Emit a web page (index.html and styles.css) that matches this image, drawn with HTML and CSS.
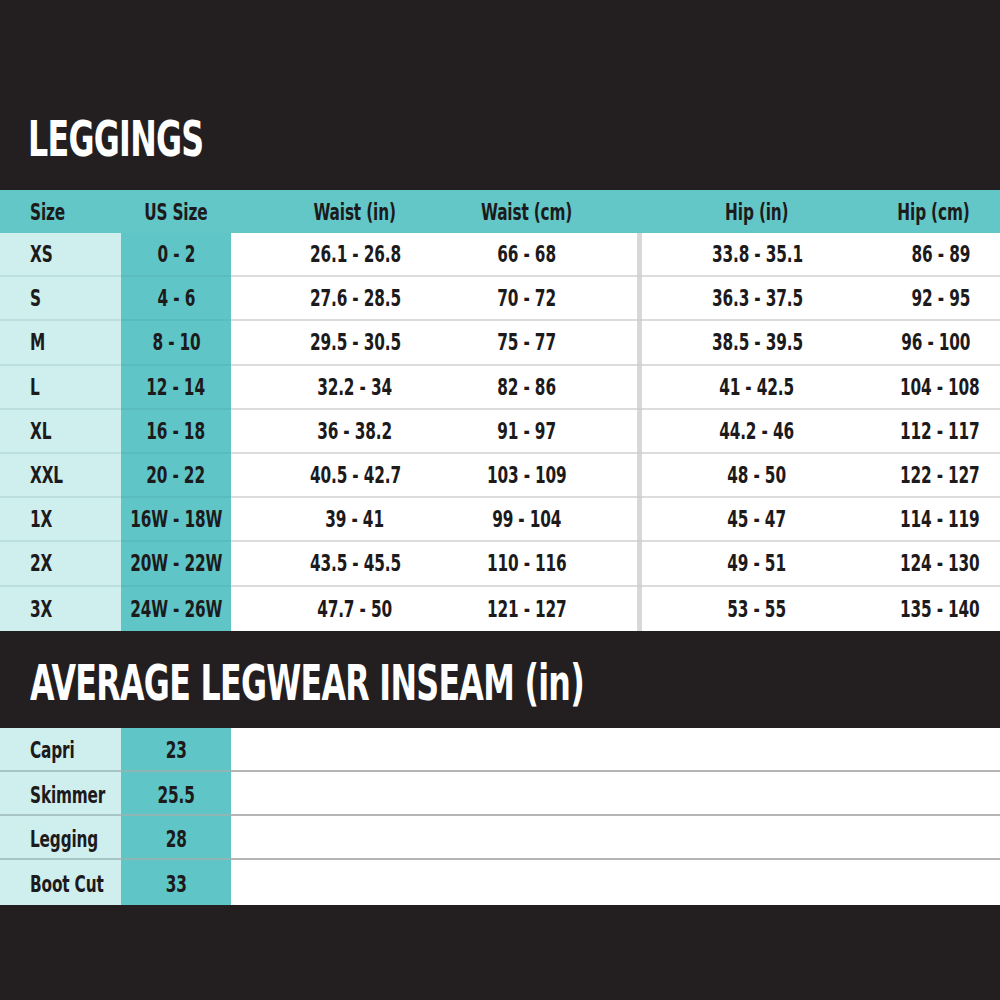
FILE: index.html
```html
<!DOCTYPE html>
<html lang="en">
<head>
<meta charset="utf-8">
<title>Leggings size chart</title>
<link rel="stylesheet" href="styles.css">
</head>
<body>
<div class="page">
  <h1 class="title title-top"><span class="tt">LEGGINGS</span></h1>
  <div class="size-table">
    <div class="row head">
      <div class="cell c-size"><span class="t">Size</span></div>
      <div class="cell c-us"><span class="t">US Size</span></div>
      <div class="cell c-mid"><span class="t">Waist (in)</span></div>
      <div class="cell c-mid"><span class="t">Waist (cm)</span></div>
      <div class="cell c-gap"></div>
      <div class="cell c-div"></div>
      <div class="cell c-mid"><span class="t">Hip (in)</span></div>
      <div class="cell c-right"><span class="t">Hip (cm)</span></div>
    </div>
    <div class="row body">
      <div class="cell c-size"><span class="t">XS</span></div><div class="cell c-us"><span class="t">0 - 2</span></div><div class="cell c-mid"><span class="t">26.1 - 26.8</span></div><div class="cell c-mid"><span class="t">66 - 68</span></div><div class="cell c-gap"></div><div class="cell c-div"></div><div class="cell c-mid"><span class="t">33.8 - 35.1</span></div><div class="cell c-right"><span class="t">86 - 89</span></div>
    </div>
    <div class="row body">
      <div class="cell c-size"><span class="t">S</span></div><div class="cell c-us"><span class="t">4 - 6</span></div><div class="cell c-mid"><span class="t">27.6 - 28.5</span></div><div class="cell c-mid"><span class="t">70 - 72</span></div><div class="cell c-gap"></div><div class="cell c-div"></div><div class="cell c-mid"><span class="t">36.3 - 37.5</span></div><div class="cell c-right"><span class="t">92 - 95</span></div>
    </div>
    <div class="row body">
      <div class="cell c-size"><span class="t">M</span></div><div class="cell c-us"><span class="t">8 - 10</span></div><div class="cell c-mid"><span class="t">29.5 - 30.5</span></div><div class="cell c-mid"><span class="t">75 - 77</span></div><div class="cell c-gap"></div><div class="cell c-div"></div><div class="cell c-mid"><span class="t">38.5 - 39.5</span></div><div class="cell c-right"><span class="t">96 - 100</span></div>
    </div>
    <div class="row body">
      <div class="cell c-size"><span class="t">L</span></div><div class="cell c-us"><span class="t">12 - 14</span></div><div class="cell c-mid"><span class="t">32.2 - 34</span></div><div class="cell c-mid"><span class="t">82 - 86</span></div><div class="cell c-gap"></div><div class="cell c-div"></div><div class="cell c-mid"><span class="t">41 - 42.5</span></div><div class="cell c-right"><span class="t">104 - 108</span></div>
    </div>
    <div class="row body">
      <div class="cell c-size"><span class="t">XL</span></div><div class="cell c-us"><span class="t">16 - 18</span></div><div class="cell c-mid"><span class="t">36 - 38.2</span></div><div class="cell c-mid"><span class="t">91 - 97</span></div><div class="cell c-gap"></div><div class="cell c-div"></div><div class="cell c-mid"><span class="t">44.2 - 46</span></div><div class="cell c-right"><span class="t">112 - 117</span></div>
    </div>
    <div class="row body">
      <div class="cell c-size"><span class="t">XXL</span></div><div class="cell c-us"><span class="t">20 - 22</span></div><div class="cell c-mid"><span class="t">40.5 - 42.7</span></div><div class="cell c-mid"><span class="t">103 - 109</span></div><div class="cell c-gap"></div><div class="cell c-div"></div><div class="cell c-mid"><span class="t">48 - 50</span></div><div class="cell c-right"><span class="t">122 - 127</span></div>
    </div>
    <div class="row body">
      <div class="cell c-size"><span class="t">1X</span></div><div class="cell c-us"><span class="t">16W - 18W</span></div><div class="cell c-mid"><span class="t">39 - 41</span></div><div class="cell c-mid"><span class="t">99 - 104</span></div><div class="cell c-gap"></div><div class="cell c-div"></div><div class="cell c-mid"><span class="t">45 - 47</span></div><div class="cell c-right"><span class="t">114 - 119</span></div>
    </div>
    <div class="row body">
      <div class="cell c-size"><span class="t">2X</span></div><div class="cell c-us"><span class="t">20W - 22W</span></div><div class="cell c-mid"><span class="t">43.5 - 45.5</span></div><div class="cell c-mid"><span class="t">110 - 116</span></div><div class="cell c-gap"></div><div class="cell c-div"></div><div class="cell c-mid"><span class="t">49 - 51</span></div><div class="cell c-right"><span class="t">124 - 130</span></div>
    </div>
    <div class="row body last">
      <div class="cell c-size"><span class="t">3X</span></div><div class="cell c-us"><span class="t">24W - 26W</span></div><div class="cell c-mid"><span class="t">47.7 - 50</span></div><div class="cell c-mid"><span class="t">121 - 127</span></div><div class="cell c-gap"></div><div class="cell c-div"></div><div class="cell c-mid"><span class="t">53 - 55</span></div><div class="cell c-right"><span class="t">135 - 140</span></div>
    </div>
  </div>
  <h2 class="title title-mid"><span class="tt">AVERAGE LEGWEAR INSEAM (in)</span></h2>
  <div class="inseam-table">
    <div class="irow"><div class="cell c-size"><span class="t">Capri</span></div><div class="cell c-us"><span class="t">23</span></div><div class="cell c-fill"></div></div>
    <div class="irow"><div class="cell c-size"><span class="t">Skimmer</span></div><div class="cell c-us"><span class="t">25.5</span></div><div class="cell c-fill"></div></div>
    <div class="irow"><div class="cell c-size"><span class="t">Legging</span></div><div class="cell c-us"><span class="t">28</span></div><div class="cell c-fill"></div></div>
    <div class="irow last"><div class="cell c-size"><span class="t">Boot Cut</span></div><div class="cell c-us"><span class="t">33</span></div><div class="cell c-fill"></div></div>
  </div>
  <div class="foot"></div>
</div>
</body>
</html>
```
FILE: styles.css
```css
html, body {
  margin: 0;
  padding: 0;
  background: #231f20;
}
.page {
  width: 1000px;
  height: 1000px;
  background: #231f20;
  font-family: "DejaVu Sans Condensed", "DejaVu Sans", "Liberation Sans", sans-serif;
  font-weight: bold;
  color: #1c1a1b;
  overflow: hidden;
}
.title {
  margin: 0;
  color: #ffffff;
  font-size: 50px;
  line-height: 50px;
  letter-spacing: -1px;
  font-weight: bold;
  padding-left: 28px;
  white-space: nowrap;
}
.tt {
  display: inline-block;
  transform: scaleX(0.705);
  transform-origin: left center;
}
.title-top {
  height: 190px;
  box-sizing: border-box;
  padding-top: 114px;
}
.title-mid {
  height: 97px;
  box-sizing: border-box;
  padding-top: 27px;
  padding-left: 30px;
}
.row, .irow {
  display: grid;
  font-size: 23px;
  letter-spacing: -0.2px;
}
.row {
  grid-template-columns: 121px 110px 248px 96px 62px 5px 230px 1fr;
  height: 44.2px;
}
.irow {
  grid-template-columns: 121px 110px 1fr;
  height: 44.25px;
}
.row.head {
  height: 43px;
  background: #63c6c7;
}
.cell {
  box-sizing: border-box;
  display: flex;
  align-items: center;
  justify-content: center;
  white-space: nowrap;
}
.t {
  display: inline-block;
  transform: scaleX(0.74);
  transform-origin: center center;
}
.c-size {
  justify-content: flex-start;
  padding-left: 30px;
}
.c-size .t {
  transform-origin: left center;
}
.c-right {
  justify-content: flex-end;
  padding-right: 30px;
}
.c-right .t {
  transform-origin: right center;
}
.body .cell, .irow .cell {
  background: #ffffff;
  border-bottom: 2px solid #dcdcdc;
}
.body .c-size, .irow .c-size {
  background: #cfeeee;
  border-bottom-color: #bcdede;
}
.body .c-us, .irow .c-us {
  background: #5fc5c6;
  border-bottom-color: #5bbcbd;
}
.body .c-div {
  background: #d8d8d8;
  border-bottom-color: #d0d0d0;
}
.irow .cell {
  border-bottom-color: #b4b4b4;
  padding-top: 3px;
}
.irow .c-size {
  border-bottom-color: #a9c4c4;
}
.irow .c-us {
  border-bottom-color: #8fb5b5;
}
.last .cell {
  border-bottom: none;
}
.foot {
  height: 95px;
}
```
